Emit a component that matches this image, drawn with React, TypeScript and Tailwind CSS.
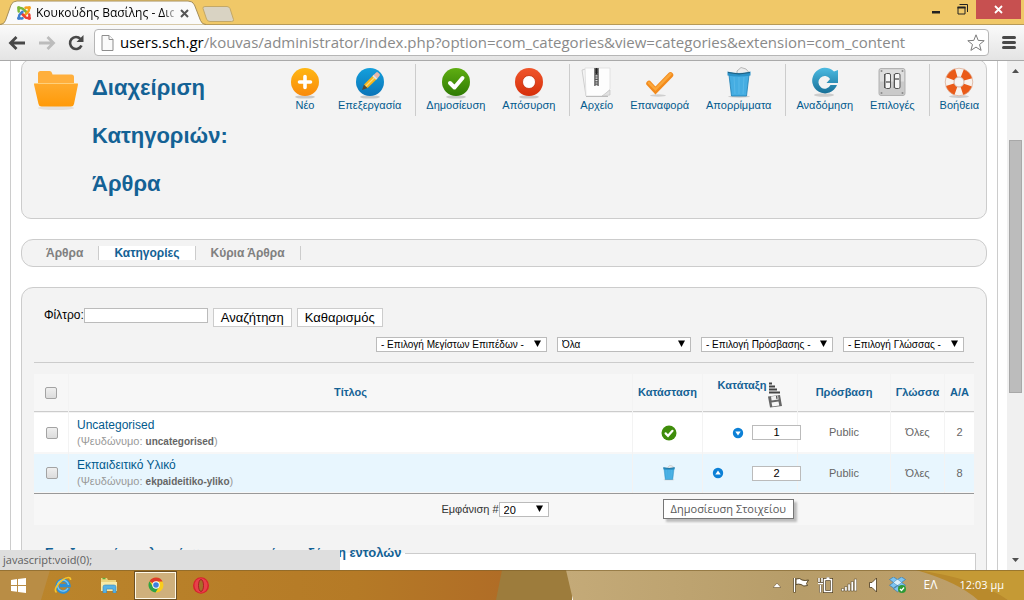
import type { ReactNode } from "react";

const BLUE_ORB = "#0c80d6";

/* ---------- toolbar icons (32x32) ---------- */

function Orb({ from, to, id, children }: { from: string; to: string; id: string; children: ReactNode }) {
  return (
    <svg viewBox="0 0 32 32" className="size-8" aria-hidden="true">
      <defs>
        <linearGradient id={id} x1="0" y1="0" x2="0" y2="1">
          <stop offset="0" stopColor={from} />
          <stop offset="1" stopColor={to} />
        </linearGradient>
      </defs>
      <ellipse cx="16" cy="30" rx="10" ry="1.600" fill="#c9c9c9" />
      <circle cx="16" cy="15" r="14" fill={`url(#${id})`} />
      {children}
    </svg>
  );
}

function NewIcon() {
  return (
    <Orb id="orb-new" from="#ffb713" to="#f98a0c">
      <path d="M16 9.500v11M10.500 15h11" stroke="#fff" strokeWidth="3.600" strokeLinecap="round" />
    </Orb>
  );
}

function EditIcon() {
  return (
    <Orb id="orb-edit" from="#14a0dc" to="#0b74b8">
      <path d="M8 23l2-5.500 3.600 3.600z" fill="#5b4a2c" />
      <path d="M10 17.500L19.500 8l3.700 3.700-9.600 9.400z" fill="#f5b51c" />
      <path d="M11.800 19.200l9.600-9.400" stroke="#fbdc7a" strokeWidth="1.200" />
      <path d="M19.500 8l2.600-2.600q1-.8 2 .2l1.500 1.500q.8 1-.2 2l-2.200 2.600z" fill="#e9b7a8" />
      <path d="M19 8.500l3.700 3.700" stroke="#dfe3e6" strokeWidth="1.800" />
    </Orb>
  );
}

function PublishIcon() {
  return (
    <Orb id="orb-publish" from="#5fae12" to="#2f7a04">
      <path d="M10 16l4.500 4.500L22.500 11" stroke="#fff" strokeWidth="4" fill="none" strokeLinecap="round" strokeLinejoin="round" />
    </Orb>
  );
}

function UnpublishIcon() {
  return (
    <Orb id="orb-unpublish" from="#f0562c" to="#d62f0a">
      <circle cx="16" cy="15" r="6.500" fill="#fff" stroke="#c42b08" strokeWidth=".8" />
    </Orb>
  );
}

function ArchiveIcon() {
  return (
    <svg viewBox="0 0 32 32" className="size-8" aria-hidden="true">
      <path d="M1 3l4-1 3 26-3 1z" fill="#f4f4f4" stroke="#c4c4c4" strokeWidth=".8" />
      <path d="M4 1h25v21l-7 7H5z" fill="#fdfdfd" stroke="#dcdcdc" strokeWidth=".8" />
      <path d="M29 23l-8 6 8-1z" fill="#e2e2e2" stroke="#bdbdbd" strokeWidth=".6" />
      <path d="M5 29.500h22" stroke="#bcbcbc" />
      <path d="M15.500 1v18" stroke="#555" strokeWidth="4.500" />
      <path d="M15.500 1v18" stroke="#ddd" strokeWidth="2" strokeDasharray="1.200 1.200" />
      <rect x="14.500" y="1" width="2" height="6" fill="#222" />
    </svg>
  );
}

function CheckinIcon() {
  return (
    <svg viewBox="0 0 32 32" className="size-8" aria-hidden="true">
      <ellipse cx="14" cy="28.500" rx="8" ry="1.200" fill="#cfcfcf" />
      <path d="M5 16.500l6.500 7L26.500 8" stroke="#f28a1c" strokeWidth="5.500" fill="none" strokeLinecap="round" />
      <path d="M5 15.800l6.500 6.500L26.500 7.200" stroke="#fba73a" strokeWidth="2.500" fill="none" strokeLinecap="round" />
    </svg>
  );
}

function TrashIcon({ className = "size-8" }: { className?: string }) {
  return (
    <svg viewBox="0 0 32 32" className={className} aria-hidden="true">
      <ellipse cx="16" cy="29.500" rx="11" ry="1.200" fill="#ccc" />
      <path d="M14 4l4-3.500 5 1.500 3 3.500-2 2H14z" fill="#ececec" stroke="#a8a8a8" strokeWidth=".8" />
      <path d="M6 8h20l-2.500 21h-15z" fill="#45ade2" stroke="#1d7fb4" strokeWidth=".8" />
      <path d="M11 10l1 17M16 10v17M21 10l-1 17" stroke="#58b8e8" strokeWidth="1" />
      <path d="M4.500 4.500q11.500 3 23 0v4q-11.500 2-23 0z" fill="#2a92c9" />
      <path d="M5 5.500q11 3 22 0" stroke="#235e7c" strokeWidth="1" fill="none" />
    </svg>
  );
}

function RebuildIcon() {
  return (
    <svg viewBox="0 0 32 32" className="size-8" aria-hidden="true">
      <defs>
        <linearGradient id="rebuild" x1="0" y1="0" x2="0" y2="1">
          <stop offset="0" stopColor="#4cbbe2" />
          <stop offset="1" stopColor="#176f97" />
        </linearGradient>
      </defs>
      <ellipse cx="15" cy="28" rx="10" ry="1.800" fill="#cdcdcd" />
      <path d="M25 4.500l4-1.500v13H17.500l3.600-4A6.300 6.300 0 1 0 21.500 18H28A12.800 12.800 0 1 1 25 4.500z" fill="url(#rebuild)" />
    </svg>
  );
}

function OptionsIcon() {
  return (
    <svg viewBox="0 0 32 32" className="size-8" aria-hidden="true">
      <rect x="3" y="1.500" width="26" height="27" rx="2" fill="#cacaca" stroke="#b3b3b3" />
      <path d="M4 2.500h24v12H4z" fill="#dedede" />
      {[[5.5, 4], [26.5, 4], [5.5, 26], [26.5, 26]].map(([x, y]) => (
        <circle key={`${x}-${y}`} cx={x} cy={y} r="1" fill="#8a8a8a" />
      ))}
      <path d="M9.500 7v14M19 7v14" stroke="#222" strokeWidth="2.400" />
      <rect x="9" y="6.500" width="5.500" height="15" rx="1.500" fill="#f6f6f6" stroke="#555" strokeWidth="1" />
      <rect x="18.500" y="6.500" width="5.500" height="15" rx="1.500" fill="#f6f6f6" stroke="#555" strokeWidth="1" />
      <path d="M10 14h4v2h-4zM19 11h4v2h-4z" fill="#8b8b8b" />
    </svg>
  );
}

function HelpIcon() {
  return (
    <svg viewBox="0 0 32 32" className="size-8" aria-hidden="true">
      <ellipse cx="16" cy="29.500" rx="10" ry="1.500" fill="#ccc" />
      <circle cx="16" cy="15" r="9.500" fill="none" stroke="#f7f1ec" strokeWidth="9" />
      <circle
        cx="16"
        cy="15"
        r="9.500"
        fill="none"
        stroke="#ea5a17"
        strokeWidth="8.500"
        strokeDasharray="8.720 6.200"
        transform="rotate(19 16 15)"
      />
      <circle cx="16" cy="15" r="13.800" fill="none" stroke="#d9a58c" strokeWidth=".7" />
      <circle cx="16" cy="15" r="5" fill="none" stroke="#c9977f" strokeWidth=".7" />
    </svg>
  );
}

function FolderIcon() {
  return (
    <svg viewBox="0 0 48 48" className="size-12 shrink-0" aria-hidden="true">
      <defs>
        <linearGradient id="folder" x1="0" y1="0" x2="0" y2="1">
          <stop offset="0" stopColor="#ffab2e" />
          <stop offset="1" stopColor="#ff9a08" />
        </linearGradient>
      </defs>
      <ellipse cx="24" cy="44" rx="18" ry="2" fill="#e3e0dc" />
      <path d="M6 21V9.500Q6 7 8.500 7h9q2 0 2.500 2l.5 1.500h19q2.500 0 2.500 2.500v8z" fill="#ffaf3c" />
      <path d="M2 20.500q0-1.500 1.500-1.500h41q1.500 0 1.500 1.500L42 40q-.5 2.500-3 2.500H9.500Q7 42.500 6.500 40z" fill="url(#folder)" />
      <path d="M2.500 19.500h43" stroke="#ffd07a" />
    </svg>
  );
}

type Tool = { label: string; icon: ReactNode };

const TOOL_GROUPS: Tool[][] = [
  [
    { label: "Νέο", icon: <NewIcon /> },
    { label: "Επεξεργασία", icon: <EditIcon /> },
  ],
  [
    { label: "Δημοσίευση", icon: <PublishIcon /> },
    { label: "Απόσυρση", icon: <UnpublishIcon /> },
  ],
  [
    { label: "Αρχείο", icon: <ArchiveIcon /> },
    { label: "Επαναφορά", icon: <CheckinIcon /> },
    { label: "Απορρίμματα", icon: <TrashIcon /> },
  ],
  [
    { label: "Αναδόμηση", icon: <RebuildIcon /> },
    { label: "Επιλογές", icon: <OptionsIcon /> },
  ],
  [{ label: "Βοήθεια", icon: <HelpIcon /> }],
];

const FILTERS = [
  { label: "Μέγιστα επίπεδα", value: "- Επιλογή Μεγίστων Επιπέδων -", width: "w-[171px]" },
  { label: "Κατάσταση", value: "Όλα", width: "w-[134px]" },
  { label: "Πρόσβαση", value: "- Επιλογή Πρόσβασης -", width: "w-[132px]" },
  { label: "Γλώσσα", value: "- Επιλογή Γλώσσας -", width: "w-[121px]" },
];

const ROWS = [
  { title: "Uncategorised", alias: "uncategorised", published: true, order: "1", id: 2 },
  { title: "Εκπαιδειτικό Υλικό", alias: "ekpaideitiko-yliko", published: false, order: "2", id: 8 },
];

/* ---------- browser frame ---------- */

function JoomlaLogo() {
  return (
    <svg viewBox="0 0 32 32" className="size-4 shrink-0" fill="none" strokeWidth="5" strokeLinecap="round" strokeLinejoin="round" aria-hidden="true">
      <path d="M5.500 13q-2-7 4-7 4 0 7 4l6 6" stroke="#7ab73a" />
      <path d="M19 5.500q7-2 7 4 0 3-4 6l-6 7" stroke="#f6a01a" />
      <path d="M26.500 19q2 7-4 7-3 0-6-4l-6-6" stroke="#ee4035" />
      <path d="M13 26.500q-7 2-7-4 0-3 4-6l3-3" stroke="#3f7fd0" />
      <circle cx="5.500" cy="5.500" r="3.500" fill="#7ab73a" stroke="none" />
      <circle cx="26.500" cy="5.500" r="3.500" fill="#f6a01a" stroke="none" />
      <circle cx="26.500" cy="26.500" r="3.500" fill="#ee4035" stroke="none" />
      <circle cx="5.500" cy="26.500" r="3.500" fill="#3f7fd0" stroke="none" />
    </svg>
  );
}

function TitleBar() {
  return (
    <div className="flex h-[25px] shrink-0 items-start justify-between border-b border-[#b79a58] bg-[#f0c868]">
      <div className="flex items-end">
        <div className="relative -mb-px h-[25px] w-[206px]">
          <svg viewBox="0 0 206 25" className="absolute inset-0 size-full" aria-hidden="true">
            <path d="M0 24.500q4 0 5.500-4L11 5q1.500-4 6-4h171q5 0 6.500 4l6 15.500q1.500 4 5.500 4" fill="#fafafa" stroke="#a58e5a" />
          </svg>
          <div className="relative flex h-full items-center pt-px pl-4">
            <JoomlaLogo />
            <span className="ml-1 w-[138px] whitespace-nowrap bg-linear-to-r from-black from-90% to-[#aaa] bg-clip-text font-['Open_Sans','Noto_Sans',sans-serif] text-xs text-transparent">
              Κουκούδης Βασίλης - Δια
            </span>
            <button type="button" aria-label="Κλείσιμο καρτέλας" className="ml-1.5">
              <svg viewBox="0 0 9 9" className="size-[9px]" aria-hidden="true">
                <path d="M1 1l7 7M8 1L1 8" stroke="#555" strokeWidth="2" />
              </svg>
            </button>
          </div>
        </div>
        <button type="button" aria-label="Νέα καρτέλα" className="mb-0.5 -ml-1">
          <svg viewBox="0 0 32 16" className="h-4 w-8" aria-hidden="true">
            <path d="M3 .5h22q2 0 3 2l3.500 11q.5 2-2 2H8q-2.500 0-3.500-2.500L1 2.500Q.5.500 3 .5z" fill="#d9d3c3" stroke="#c3a868" />
          </svg>
        </button>
      </div>

      <div className="flex items-center pr-[3px]">
        <button type="button" aria-label="Ελαχιστοποίηση" className="mr-4 pt-px">
          <svg viewBox="0 0 10 10" className="size-2.5" aria-hidden="true">
            <path d="M1 6h8v2.500H1z" fill="#222" />
          </svg>
        </button>
        <button type="button" aria-label="Επαναφορά παραθύρου" className="mr-2">
          <svg viewBox="0 0 11 11" className="size-[11px]" fill="none" stroke="#222" aria-hidden="true">
            <path d="M1 3v7h7V3" strokeWidth="1" />
            <path d="M.5 3.500h8" strokeWidth="2" />
            <path d="M2.500 .5h8V8" />
          </svg>
        </button>
        <button type="button" aria-label="Κλείσιμο" className="flex h-[19px] w-[45px] items-center justify-center bg-[#c75050]">
          <svg viewBox="0 0 9 9" className="size-[9px]" aria-hidden="true">
            <path d="M1 1l7 7M8 1L1 8" stroke="#fff" strokeWidth="1.800" />
          </svg>
        </button>
      </div>
    </div>
  );
}

function AddressBar() {
  return (
    <div className="flex h-9 shrink-0 items-center border-b border-[#a9a9a9] bg-linear-to-b from-[#fafafa] to-[#e4e4e4] px-2">
      <button type="button" aria-label="Πίσω">
        <svg viewBox="0 0 18 16" className="h-4 w-[18px]" fill="none" stroke="#484848" strokeWidth="2.800" aria-hidden="true">
          <path d="M2.500 8H17M8.500 2L2.500 8l6 6" />
        </svg>
      </button>
      <button type="button" aria-label="Μπροστά" className="ml-3">
        <svg viewBox="0 0 18 16" className="h-4 w-[18px]" fill="none" stroke="#bcbcbc" strokeWidth="2.800" aria-hidden="true">
          <path d="M15.500 8H1M9.500 2l6 6-6 6" />
        </svg>
      </button>
      <button type="button" aria-label="Ανανέωση" className="ml-3">
        <svg viewBox="0 0 16 16" className="size-4" fill="none" stroke="#484848" aria-hidden="true">
          <path d="M12.500 4A6 6 0 1 0 13.500 10.500" strokeWidth="2.600" />
          <path d="M15.500 0v7h-7z" fill="#484848" stroke="none" />
        </svg>
      </button>
      <div className="ml-2.5 flex h-[27px] flex-1 items-center rounded-sm border border-[#b6b6b6] bg-white">
        <svg viewBox="0 0 13 16" className="ml-1.5 h-4 w-[13px]" fill="#fafafa" stroke="#8d8d8d" aria-hidden="true">
          <path d="M1 .5h7l4 4v11H1z" />
          <path d="M8 .5v4h4" />
        </svg>
        <p className="ml-1.5 flex-1 whitespace-nowrap font-['Open_Sans','Noto_Sans',sans-serif] text-[15px] text-[#8a8a8a]">
          <span className="text-black">users.sch.gr</span>
          /kouvas/administrator/index.php?option=com_categories&amp;view=categories&amp;extension=com_content
        </p>
        <button type="button" aria-label="Σελιδοδείκτης" className="mr-[3px]">
          <svg viewBox="0 0 18 18" className="size-[18px]" fill="#fff" stroke="#7c7c7c" strokeLinejoin="round" aria-hidden="true">
            <path d="M9 .8l2.200 5.600 6 .3-4.700 3.800 1.600 5.900L9 13.100l-5.100 3.300 1.600-5.900L.8 6.700l6-.3z" />
          </svg>
        </button>
      </div>
      <button type="button" aria-label="Μενού" className="ml-[13px] flex w-3.5 flex-col gap-0.5">
        <span className="h-[3px] rounded-sm bg-[#484848]" />
        <span className="h-[3px] rounded-sm bg-[#484848]" />
        <span className="h-[3px] rounded-sm bg-[#484848]" />
      </button>
    </div>
  );
}

function Scrollbar() {
  return (
    <div className="flex w-[17px] shrink-0 flex-col items-center bg-[#f0f0f0]">
      <svg viewBox="0 0 7 4" className="mt-2 h-1 w-[7px] shrink-0" aria-hidden="true">
        <path d="M0 4l3.500-4L7 4z" fill="#505050" />
      </svg>
      <div className="grow-[67]" />
      <div className="w-[13px] grow-[252] border border-[#a8a8a8] bg-[#bcbcbc]" />
      <div className="grow-[166]" />
      <svg viewBox="0 0 7 4" className="mb-2 h-1 w-[7px] shrink-0" aria-hidden="true">
        <path d="M0 0l3.500 4L7 0z" fill="#505050" />
      </svg>
    </div>
  );
}

/* ---------- administrator page ---------- */

function Toolbar() {
  return (
    <section className="flex h-40 items-start rounded-[10px] border border-[#ccc] bg-[#f3f3f3] pt-1 pl-2.5">
      <FolderIcon />
      <h1 className="ml-3 flex-1 text-[22px] leading-12 font-bold text-[#146295]">
        Διαχείριση Κατηγοριών: Άρθρα
      </h1>
      <ul className="flex divide-x divide-[#ccc]">
        {TOOL_GROUPS.map((group) => (
          <li key={group[0].label} className="flex h-[52px] gap-[17px] pr-3.5 pl-2.5 last:pr-[7px]">
            {group.map((tool) => (
              <a key={tool.label} href="#" className="flex flex-col items-center pt-[3px] text-[11px] leading-3 text-[#025a8d]">
                {tool.icon}
                {tool.label}
              </a>
            ))}
          </li>
        ))}
      </ul>
    </section>
  );
}

function Submenu() {
  return (
    <nav className="mt-5 flex h-7 items-center rounded-xl border border-[#ccc] bg-[#f3f3f3] pl-[9px] text-xs leading-[14px] font-bold text-[#808080]">
      <a href="#" className="border-r border-[#ccc] px-[15px]">Άρθρα</a>
      <a href="#" className="border-r border-[#ccc] bg-white px-[15px] text-[#146295]">Κατηγορίες</a>
      <a href="#" className="border-r border-[#ccc] px-[15px]">Κύρια Άρθρα</a>
    </nav>
  );
}

function Select({ label, value, width, text = "text-[10px]" }: { label: string; value: string; width: string; text?: string }) {
  return (
    <span className={`relative inline-flex ${width}`}>
      <select aria-label={label} className={`h-[15px] w-full appearance-none border border-[#bbb] bg-white pl-1 leading-3 text-black ${text}`}>
        <option>{value}</option>
      </select>
      <svg viewBox="0 0 7 7" className="pointer-events-none absolute top-[3px] right-1.5 size-[7px]" aria-hidden="true">
        <path d="M0 .5h7L3.500 7z" fill="#000" />
      </svg>
    </span>
  );
}

function Checkbox({ label }: { label: string }) {
  return (
    <input
      type="checkbox"
      aria-label={label}
      className="block size-3 appearance-none rounded-xs border border-[#a3a3a3] bg-linear-to-b from-[#efefef] to-[#dcdcdc]"
    />
  );
}

function SortIcon() {
  return (
    <svg viewBox="0 0 14 26" className="ml-0.5 h-[26px] w-3.5 self-end" aria-hidden="true">
      <path d="M1 1.500h3M1 4.500h6M1 7.500h8M1 10.500h11" stroke="#444" strokeWidth="1.800" />
      <path d="M0 14.500l12-1.500 2 11-12 1.500z" fill="#666" />
      <path d="M3 14.500l7-1 .6 4-7 1z" fill="#f0f0f0" />
      <path d="M3.500 20.500l7-1 .8 4-7 1z" fill="#f7f7f7" />
      <path d="M8 14l1.200-.2.4 3-1.200.2z" fill="#444" />
    </svg>
  );
}

function OrderArrow({ up = false }: { up?: boolean }) {
  return (
    <button type="button" aria-label={up ? "Μετακίνηση πάνω" : "Μετακίνηση κάτω"}>
      <svg viewBox="0 0 12 12" className="size-3" aria-hidden="true">
        <circle cx="6" cy="6" r="5.200" fill={BLUE_ORB} />
        <path d={up ? "M3.300 7.600L6 3.400l2.700 4.200z" : "M3.300 4.400L6 8.600l2.700-4.200z"} fill="#fff" />
      </svg>
    </button>
  );
}

function CategoryTable() {
  const th = "border-b border-[#ccc] bg-[#f7f7f7] p-0";
  return (
    <div className="-mx-px mt-[11px]">
      <table className="w-full table-fixed border-separate border-spacing-x-px border-spacing-y-0 text-[11px] text-[#666]">
        <colgroup>
          <col className="w-[34px]" />
          <col />
          <col className="w-[69px]" />
          <col className="w-[94px]" />
          <col className="w-[92px]" />
          <col className="w-[53px]" />
          <col className="w-[29px]" />
        </colgroup>
        <thead>
          <tr className="h-[38px] text-[#146295]">
            <th className={th}>
              <div className="flex justify-center"><Checkbox label="Επιλογή όλων" /></div>
            </th>
            <th className={th}>Τίτλος</th>
            <th className={th}>Κατάσταση</th>
            <th className={th}>
              <div className="flex h-[30px] justify-center leading-[14px]">
                Κατάταξη
                <SortIcon />
              </div>
            </th>
            <th className={th}>Πρόσβαση</th>
            <th className={th}>Γλώσσα</th>
            <th className={th}>Α/Α</th>
          </tr>
        </thead>
        <tbody>
          {ROWS.map((row, i) => {
            const td = i % 2
              ? "border-t-2 border-b border-t-[#f7f7f7] border-b-[#f7f7f7] bg-[#e8f6fe] p-0"
              : "border-t border-[#f3f3f3] bg-white p-0";
            return (
              <tr key={row.id} className="h-10 text-center last:h-[41px]">
                <td className={td}>
                  <div className="flex justify-center pl-0.5"><Checkbox label={row.title} /></div>
                </td>
                <td className={`${td} text-left`}>
                  <div className="pt-px pl-2">
                    <a href="#" className="block text-xs leading-4 text-[#025a8d]">{row.title}</a>
                    <p className="leading-4 text-[#999]">
                      (Ψευδώνυμο: <strong className="text-[10px] text-[#666]">{row.alias}</strong>)
                    </p>
                  </div>
                </td>
                <td className={td}>
                  <button type="button" aria-label="Αλλαγή κατάστασης" className="mx-auto flex pl-0.5">
                    {row.published ? (
                      <svg viewBox="0 0 16 16" className="size-4" aria-hidden="true">
                        <circle cx="8" cy="8" r="7.500" fill="#3f8d0b" />
                        <path d="M4.600 8.400l2.400 2.400 4.500-5" stroke="#fff" strokeWidth="2.200" fill="none" strokeLinecap="round" />
                      </svg>
                    ) : (
                      <TrashIcon className="size-4" />
                    )}
                  </button>
                </td>
                <td className={td}>
                  <div className="flex items-center pl-[9px]">
                    <span className="flex w-5 shrink-0">{i > 0 && <OrderArrow up />}</span>
                    <span className="flex w-5 shrink-0">{i < ROWS.length - 1 && <OrderArrow />}</span>
                    <input
                      type="text"
                      aria-label={`Κατάταξη ${row.title}`}
                      defaultValue={row.order}
                      className="relative h-[15px] w-[49px] shrink-0 border border-[#bbb] bg-white text-center text-[11px] text-black"
                    />
                  </div>
                </td>
                <td className={td}>Public</td>
                <td className={td}>Όλες</td>
                <td className={td}>{row.id}</td>
              </tr>
            );
          })}
        </tbody>
        <tfoot>
          <tr className="h-8">
            <td colSpan={7} className="border-t border-[#999] bg-[#f7f7f7] p-0 text-[#333]">
              <div className="flex items-center justify-center pr-[18px]">
                Εμφάνιση #
                <Select label="Εμφάνιση" value="20" width="w-[50px]" text="text-[11px]" />
              </div>
            </td>
          </tr>
        </tfoot>
      </table>
    </div>
  );
}

function CategoryList() {
  return (
    <section className="relative mt-5 rounded-xl border border-[#ccc] bg-[#f3f3f3] px-3 pt-5 pb-3">
      <form onSubmit={(e) => e.preventDefault()} className="flex items-start pl-2.5 text-xs text-black">
        <label htmlFor="filter-search" className="leading-[14px]">Φίλτρο:</label>
        <input id="filter-search" type="text" className="h-[15px] w-[124px] border border-[#bbb] bg-white px-0.5" />
        <button type="submit" className="ml-[5px] h-[19px] border border-[#ccc] bg-white px-[7px] text-[13px] leading-4">Αναζήτηση</button>
        <button type="button" className="ml-[5px] h-[19px] border border-[#ccc] bg-white px-[7px] text-[13px] leading-4">Καθαρισμός</button>
      </form>
      <div className="mt-2.5 flex justify-end gap-2.5 border-b border-[#ccc] pr-2.5 pb-2.5">
        {FILTERS.map((filter) => (
          <Select key={filter.label} {...filter} />
        ))}
      </div>
      <CategoryTable />
      <fieldset className="-mx-0.5 mt-5 h-20 border border-[#ccc] bg-white px-[9px]">
        <legend className="px-[3px] text-[13px] leading-4 font-bold text-[#146295]">
          Επεξεργασία επιλεγμένων κατηγοριών με δέσμη εντολών
        </legend>
      </fieldset>
      {/* hover hint for the state button */}
      <div role="tooltip" className="absolute top-[211px] right-48 border border-[#767676] bg-white px-[7px] font-['Open_Sans','Noto_Sans',sans-serif] text-[11px] leading-[18px] whitespace-nowrap text-[#575757] shadow-[3px_3px_2px_#8888]">
        Δημοσίευση Στοιχείου
      </div>
    </section>
  );
}

/* ---------- windows taskbar ---------- */

function Wallpaper() {
  return (
    <svg viewBox="0 0 1024 30" preserveAspectRatio="none" className="absolute inset-0 size-full" aria-hidden="true">
      <defs>
        <linearGradient id="wall-left">
          <stop offset="0" stopColor="#bb862c" />
          <stop offset=".7" stopColor="#b57a26" />
          <stop offset="1" stopColor="#b06c26" />
        </linearGradient>
        <linearGradient id="wall-right">
          <stop offset="0" stopColor="#c4aa78" />
          <stop offset=".5" stopColor="#b79d69" />
          <stop offset="1" stopColor="#c0a06a" />
        </linearGradient>
      </defs>
      <path d="M0 0h510v30H0z" fill="url(#wall-left)" />
      <path d="M0 0h50l-9 30H0z" fill="#b98d45" />
      <path d="M502 0h70v30h-76z" fill="#9d7c3c" />
      <path d="M566 0h458v30H573z" fill="url(#wall-right)" />
      <path d="M916 0h108v30h-16q-40-20-92-30z" fill="#c59a35" />
      <path d="M916 0q60 8 92 30h-30q-20-18-62-30z" fill="#b98a2c" />
      <path d="M0 .5h1024" stroke="#7d6129" strokeOpacity=".6" />
    </svg>
  );
}

function Taskbar() {
  return (
    <footer className="relative h-[30px] shrink-0 font-['Open_Sans','Noto_Sans',sans-serif] text-white">
      <Wallpaper />
      <div className="relative flex h-full items-center">
        <button type="button" aria-label="Έναρξη" className="ml-[11px]">
          <svg viewBox="0 0 15 15" className="size-[15px]" fill="#fff" aria-hidden="true">
            <path d="M0 2l6-.9V7H0zM7 1l8-1v7H7zM0 8h6v5.800L0 13zM7 8h8v7l-8-1z" />
          </svg>
        </button>
        <button type="button" aria-label="Internet Explorer" className="ml-7">
          <svg viewBox="0 0 18 18" className="size-[18px]" fill="none" aria-hidden="true">
            <path d="M14.500 12A5.800 5.800 0 1 1 14.800 9.500H6" stroke="#2d8fd5" strokeWidth="3.600" />
            <path d="M14 12A5.500 5.500 0 1 1 14.500 9" stroke="#7cc8f3" strokeWidth="1.400" />
            <path d="M2.500 16.500C-.5 14 3 8 8.500 4 13 .8 17 .6 16.500 4" stroke="#f7c52c" strokeWidth="1.600" />
          </svg>
        </button>
        <button type="button" aria-label="Εξερεύνηση αρχείων" className="ml-7">
          <svg viewBox="0 0 18 16" className="h-4 w-[18px]" aria-hidden="true">
            <path d="M1 1h6l1 2h8v11H1z" fill="#ecd47c" />
            <path d="M2.500 1.500h3" stroke="#5cab3c" strokeWidth="1.500" />
            <path d="M1 5h16v9H1z" fill="#f8eaa8" />
            <path d="M3 16V10q0-2 2-2h9q2 0 2 2v6h-3v-4H6.500v4z" fill="#58b2e4" stroke="#3688bd" strokeWidth=".6" />
          </svg>
        </button>
        <button type="button" aria-label="Chrome" className="ml-4 flex h-[29px] w-[43px] items-center justify-center border border-[#6d5024] bg-[#cfb07c] shadow-[inset_0_0_0_1px_#fff8e6]">
          <svg viewBox="0 0 16 16" className="size-4" aria-hidden="true">
            <circle cx="8" cy="8" r="7.500" fill="#f9cd1d" />
            <path d="M8 8L1.500 4.200A7.500 7.500 0 0 1 14.700 4.600H8z" fill="#dc3b2c" />
            <path d="M1.500 4.200A7.500 7.500 0 0 0 7.500 15.500L11 9.800 8 11.400 4.900 9.600z" fill="#2ea04a" />
            <circle cx="8" cy="8" r="3.700" fill="#fff" />
            <circle cx="8" cy="8" r="2.800" fill="#3e7fdc" />
          </svg>
        </button>
        <button type="button" aria-label="Opera" className="ml-4">
          <svg viewBox="0 0 16 17" className="h-[17px] w-4" aria-hidden="true">
            <ellipse cx="8" cy="8.500" rx="8" ry="8.300" fill="#d8202d" />
            <ellipse cx="8" cy="8.500" rx="6.500" ry="7.300" fill="#e8404a" />
            <ellipse cx="8" cy="8.500" rx="2.500" ry="6" fill="#a5702a" stroke="#a3121d" strokeWidth=".8" />
          </svg>
        </button>

        <div className="ml-auto flex items-center pr-5">
          <svg viewBox="0 0 8 5" className="h-[5px] w-2" aria-hidden="true">
            <path d="M0 4.500L4 0l4 4.500z" fill="#fff" stroke="#6b5430" strokeWidth=".6" />
          </svg>
          <svg viewBox="0 0 16 16" className="ml-3 size-4" aria-hidden="true">
            <path d="M1.500 1v14.500" stroke="#4b3a1c" strokeWidth="2.600" />
            <path d="M3 2q4-1.500 6 1 3 1 6.500 0l-2 3.500 1 2q-4 1.500-6.500-1-2.500-.8-5 0z" fill="#fff" stroke="#4b3a1c" strokeWidth=".9" />
            <path d="M1.500 1v14" stroke="#fff" strokeWidth="1.300" />
          </svg>
          <svg viewBox="0 0 16 16" className="ml-2 size-4" fill="none" aria-hidden="true">
            <path d="M7.500 2.500h7v12h-7zM9.500 1h3" stroke="#4b3a1c" strokeWidth="3" />
            <path d="M3.500 8v7.500M2 1v4M5 1v4M1 6h5" stroke="#4b3a1c" strokeWidth="2.600" />
            <path d="M7.500 2.500h7v12h-7zM9.500 1h3" stroke="#fff" strokeWidth="1.600" />
            <path d="M3.500 8v7.500M2 1v4M5 1v4M1 6.500h5" stroke="#fff" strokeWidth="1.600" />
          </svg>
          <svg viewBox="0 0 16 14" className="ml-2 h-3.5 w-4" fill="#fff" stroke="#4b3a1c" strokeWidth=".5" aria-hidden="true">
            <path d="M.5 10.500h2.400v2.500H.5zM3.700 8.500h2.400V13H3.700zM6.900 6h2.400v7H6.900zM10.100 3.500h2.400V13h-2.400zM13.300 1h2.400v12h-2.400z" />
          </svg>
          <svg viewBox="0 0 8 16" className="ml-3 h-4 w-2" fill="#fff" stroke="#4b3a1c" strokeWidth=".8" aria-hidden="true">
            <path d="M.5 5.500H3L7.500 1v14L3 10.500H.5z" />
          </svg>
          <svg viewBox="0 0 17 16" className="ml-3 h-4 w-[17px]" aria-hidden="true">
            <path d="M4.500 0l4 2.500-4 3-4-3zM12.500 0l4 2.500-4 3-4-3zM4.500 5.500l4 2.800-4 2.700-4-2.700zM12.500 5.500l4 2.800-4 2.700-4-2.700zM8.500 9l4 2.800-4 3-4-3z" fill="#7fc4f0" stroke="#2573b5" strokeWidth=".6" />
            <path d="M8.500 2.500l4 3-4 2.800-4-2.800z" fill="#d9effc" />
            <circle cx="13" cy="12" r="4" fill="#2d9a35" />
            <path d="M11 12l1.500 1.500 2.500-3" stroke="#fff" strokeWidth="1.300" fill="none" />
          </svg>
          <span className="ml-[18px] text-xs">ΕΛ</span>
          <time className="ml-[22px] text-[11px]">12:03 μμ</time>
        </div>
      </div>
    </footer>
  );
}

export default function App() {
  return (
    <div className="flex h-screen flex-col overflow-hidden bg-white font-['Liberation_Sans',Arial,sans-serif]">
      <TitleBar />
      <AddressBar />
      <div className="relative flex min-h-0 flex-1">
        <main className="min-w-0 flex-1 overflow-hidden pr-[9px] pl-2.5">
          <div className="-mt-0.5 border-x border-[#ccc] px-2.5">
            <Toolbar />
            <Submenu />
            <CategoryList />
          </div>
        </main>
        <Scrollbar />
        <div className="absolute bottom-0 left-0 h-5 w-[340px] bg-[#dedede] pl-[3px] font-['Open_Sans','Noto_Sans',sans-serif] text-[11px] leading-5 text-[#5f5f5f]">
          javascript:void(0);
        </div>
      </div>
      <Taskbar />
    </div>
  );
}
